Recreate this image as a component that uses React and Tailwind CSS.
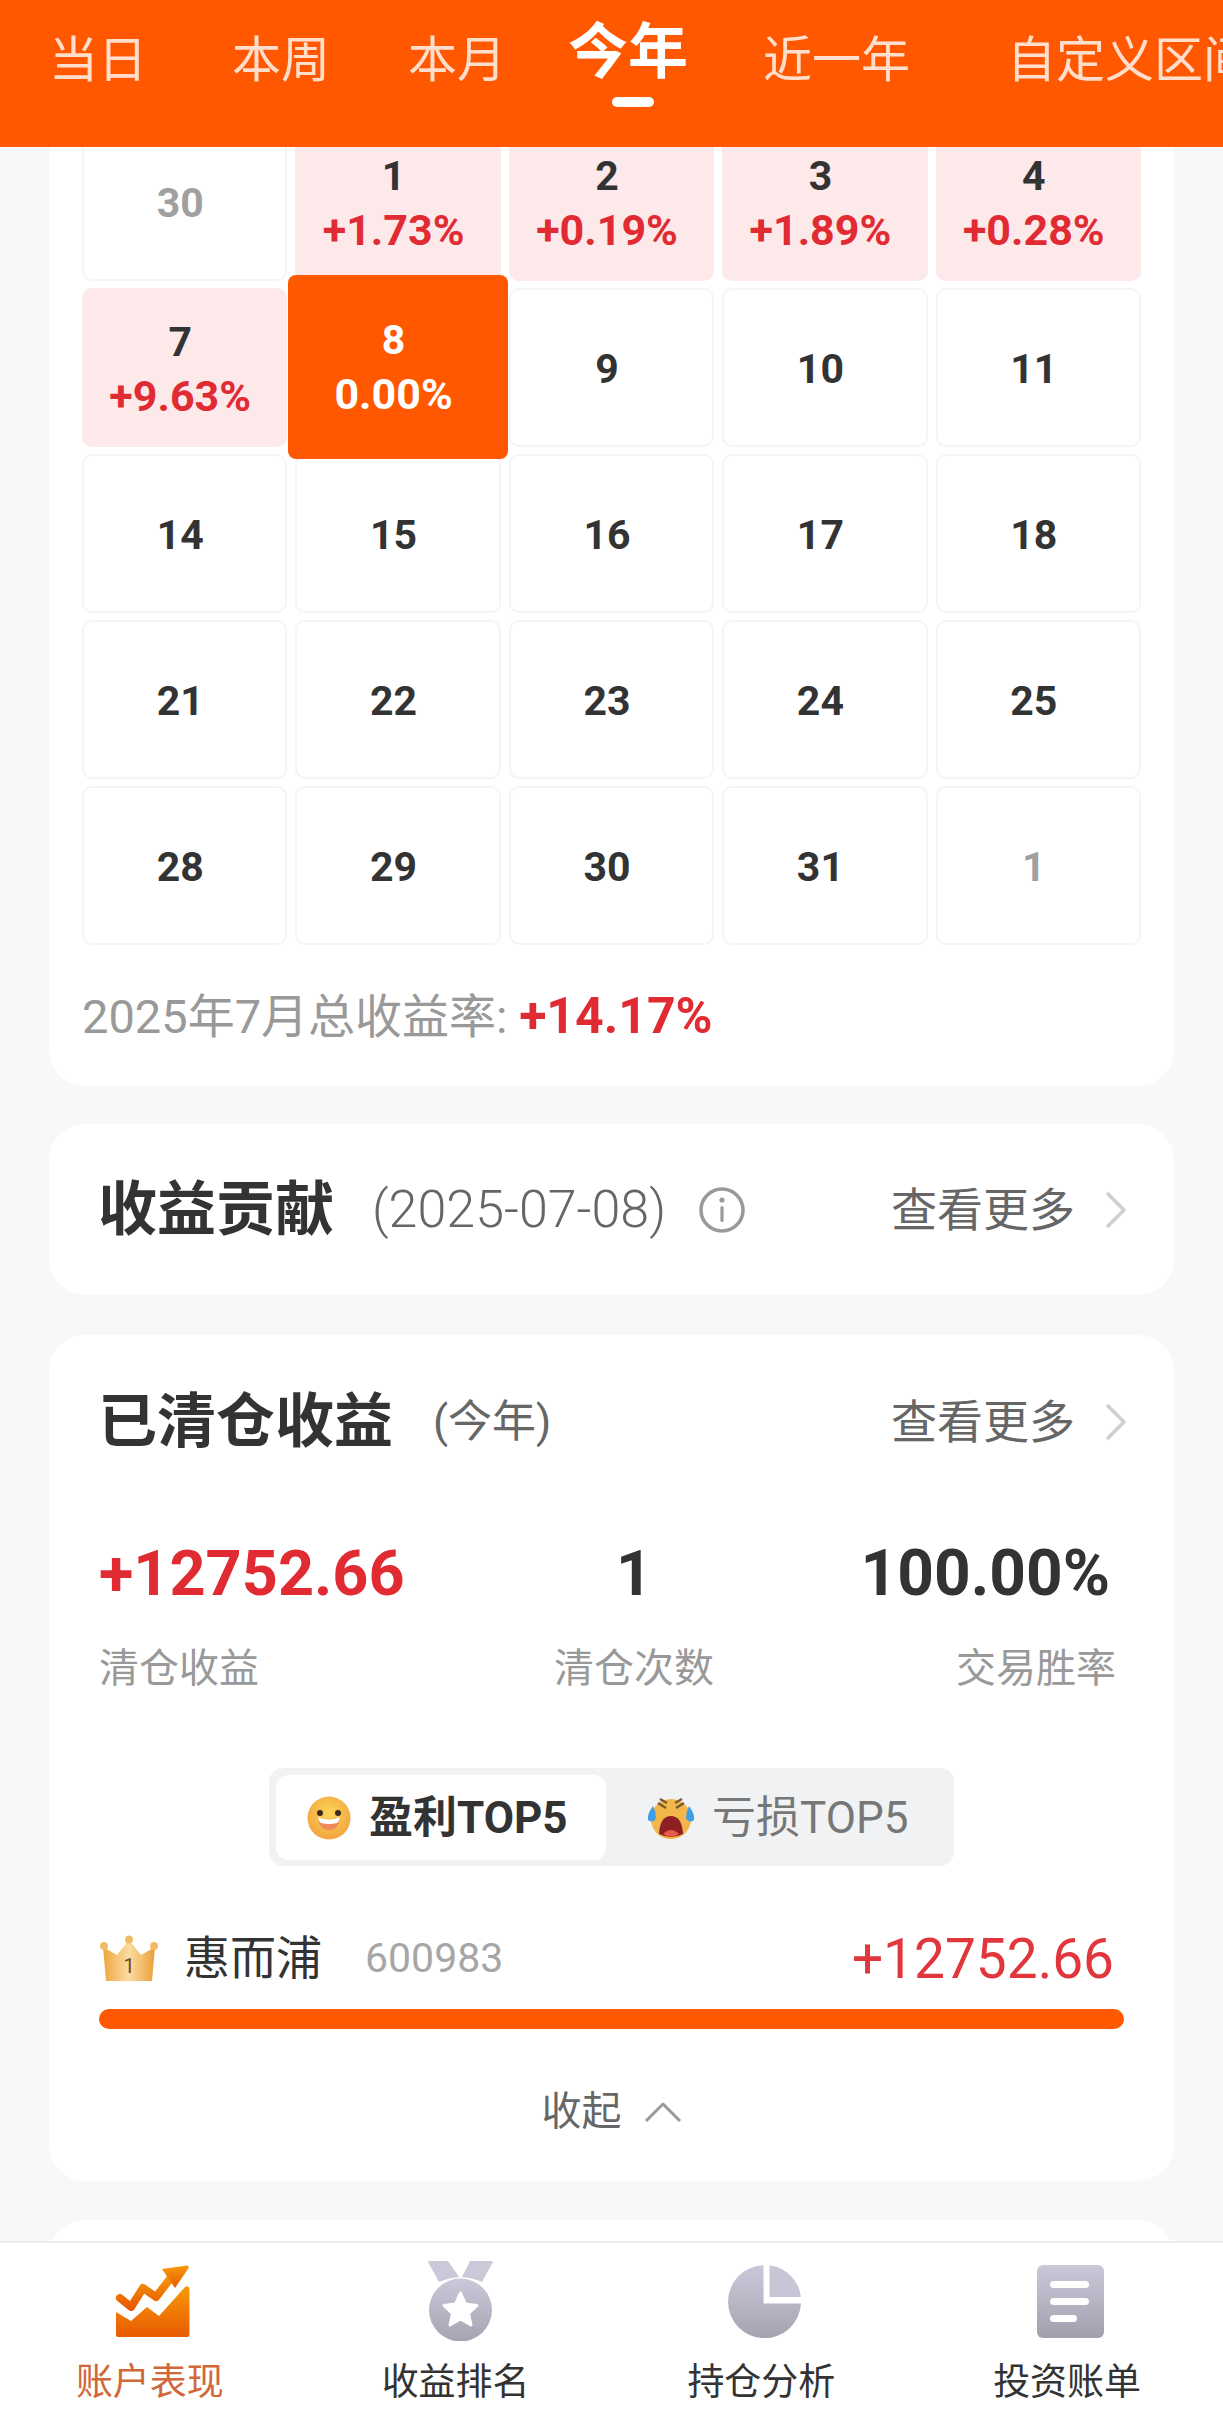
import React from 'react';

const Chevron = () => (
    <svg width="22" height="38" viewBox="0 0 22 38" fill="none" className="ml-[30px]">
        <path d="M2 2 L19 19 L2 36" stroke="#cfcfcf" strokeWidth="3.5" strokeLinejoin="round" />
    </svg>
);

const MoreLink = () => (
    <div className="ml-auto flex items-center text-[46px] leading-[60px] text-[#666666]">
        查看更多
        <Chevron />
    </div>
);

const InfoIcon = () => (
    <svg width="46" height="46" viewBox="0 0 46 46" fill="none" className="ml-[33px]">
        <circle cx="23" cy="23" r="21" stroke="#999999" strokeWidth="3.5" />
        <circle cx="23" cy="13" r="2.6" fill="#999999" />
        <rect x="21.4" y="19" width="3.2" height="16" rx="1.6" fill="#999999" />
    </svg>
);

const TrendIcon = () => (
    <svg width="75" height="72" viewBox="0 0 75 72">
        <defs>
            <linearGradient id="trendFill" x1="0" y1="0" x2="0" y2="1">
                <stop offset="0" stopColor="#f79a0a" />
                <stop offset="1" stopColor="#e85a00" />
            </linearGradient>
        </defs>
        <path fill="url(#trendFill)" d="M1 47 L16 56 L32 42 L44 51 L70 22 Q74 20 74.500 24 L74.500 70 Q74.500 72 72 72 L3 72 Q1 72 1 70 Z" />
        <path fill="none" stroke="url(#trendFill)" strokeWidth="8" strokeLinecap="round" strokeLinejoin="round" d="M5 33 L16 42 L28 23 L41 32 L58 10" />
        <path fill="url(#trendFill)" d="M47 4 L72 0.500 Q75 1 73 4 L60 23 Z" />
    </svg>
);

const MedalIcon = () => (
    <svg width="65" height="80" viewBox="0 0 65 80" className="translate-x-[2px]">
        <defs>
            <linearGradient id="medalFill" x1="0" y1="0" x2="0" y2="1">
                <stop offset="0" stopColor="#c9c9da" />
                <stop offset="1" stopColor="#a4a4b1" />
            </linearGradient>
        </defs>
        <path fill="#c9c9da" d="M0 1 Q0 0 2 0 L20 0 L31 16 Q20 17 11 21 Z" />
        <path fill="#c9c9da" d="M65 1 Q65 0 63 0 L42 0 L34 16 Q45 17 54 21 Z" />
        <circle cx="32.500" cy="49" r="31.500" fill="url(#medalFill)" />
        <path fill="#ffffff" stroke="#ffffff" strokeWidth="3" strokeLinejoin="round" d="M32.500 32 L37.500 43 L49 44.500 L40.500 52.500 L43 64 L32.500 58 L22 64 L24.500 52.500 L16 44.500 L27.500 43 Z" />
    </svg>
);

const PieIcon = () => (
    <svg width="73" height="73" viewBox="0 0 73 73">
        <defs>
            <linearGradient id="pieFill" x1="0" y1="0" x2="0" y2="1">
                <stop offset="0" stopColor="#c9c9da" />
                <stop offset="1" stopColor="#a4a4b1" />
            </linearGradient>
        </defs>
        <path fill="url(#pieFill)" d="M35.500 0.200 A36.500 36.500 0 1 0 73 38.500 L35.500 38.500 Z" />
        <path fill="#c6c6d6" d="M41.500 0.300 A36.500 36.500 0 0 1 73 32 L41.500 32 Z" />
    </svg>
);

const BillIcon = () => (
    <svg width="67" height="73" viewBox="0 0 67 73">
        <defs>
            <linearGradient id="billFill" x1="0" y1="0" x2="0" y2="1">
                <stop offset="0" stopColor="#c9c9da" />
                <stop offset="1" stopColor="#a0a0ad" />
            </linearGradient>
        </defs>
        <rect width="67" height="73" rx="6" fill="url(#billFill)" />
        <rect x="13" y="16" width="39" height="7" rx="3.500" fill="#ffffff" />
        <rect x="13" y="33" width="39" height="7" rx="3.500" fill="#ffffff" />
        <rect x="13" y="50" width="27" height="7" rx="3.500" fill="#ffffff" />
    </svg>
);

const SmileEmoji = () => (
    <svg width="44" height="44" viewBox="0 0 44 44">
        <defs>
            <radialGradient id="smileFill" cx="0.500" cy="0.400" r="0.650">
                <stop offset="0" stopColor="#fdd65a" />
                <stop offset="1" stopColor="#f0a03a" />
            </radialGradient>
        </defs>
        <circle cx="22" cy="22" r="21.500" fill="url(#smileFill)" />
        <circle cx="13" cy="17" r="3" fill="#3a2a20" />
        <circle cx="31" cy="17" r="3" fill="#3a2a20" />
        <path fill="#ef8a5a" d="M11 21 Q22 26 33 21 Q32 34 22 34 Q12 34 11 21 Z" />
        <path fill="#ffffff" d="M11 21 Q22 26 33 21 Q32 26 30 27 Q22 29 14 27 Q12 26 11 21 Z" />
    </svg>
);

const CryEmoji = () => (
    <svg width="48" height="44" viewBox="0 0 48 44">
        <circle cx="24" cy="23" r="20" fill="#f2b64a" />
        <path fill="none" stroke="#7a5a30" strokeWidth="2.500" d="M11 7 L19 12 M37 7 L29 12 M13 3 L20 7 M35 3 L28 7" />
        <path fill="#3f9ee8" d="M6 10 Q0 18 1 24 Q6 28 9 22 Q9 16 6 10 Z M42 10 Q48 18 47 24 Q42 28 39 22 Q39 16 42 10 Z" />
        <path fill="#8e1f22" d="M12 38 Q13 20 24 20 Q35 20 36 38 Q24 44 12 38 Z" />
        <path fill="#e85a4a" d="M16 38 Q24 30 32 38 Q24 43 16 38 Z" />
    </svg>
);

const CrownIcon = () => (
    <svg width="60" height="46" viewBox="0 0 60 46">
        <defs>
            <linearGradient id="crownFill" x1="0" y1="0" x2="1" y2="0">
                <stop offset="0" stopColor="#eda63f" />
                <stop offset="0.500" stopColor="#fbdca0" />
                <stop offset="1" stopColor="#ec9f3a" />
            </linearGradient>
        </defs>
        <path fill="url(#crownFill)" d="M4 12 L18 20 L30 5 L42 20 L56 12 L53 46 L7 46 Z" />
        <circle cx="5" cy="11" r="4" fill="#f2bb66" />
        <circle cx="30" cy="4.500" r="4" fill="#f2bb66" />
        <circle cx="55" cy="11" r="4" fill="#f2bb66" />
        <text x="30" y="38" textAnchor="middle" fontSize="20" fontFamily="Roboto, sans-serif" fill="#6b4a2e">1</text>
    </svg>
);

const Cell = ({ day, pct, muted, tone }) => (
    <div className={`h-[159px] pr-[9px] pt-[2px] rounded-[10px] flex flex-col items-center justify-center text-[41px] leading-[54px] font-bold ${tone === 'pink' ? 'bg-[#fde8ea]' : 'bg-white border-2 border-[#f5f5f5]'} ${muted ? 'text-[#a0a0a0]' : 'text-[#333333]'}`}>
        <div>{day}</div>
        {pct && <div className="text-[43px] leading-[54px] text-[#e12b33]">{pct}</div>}
    </div>
);

const ActiveCell = () => (
    <div className="relative h-[159px]">
        <div className="absolute -inset-x-[7px] -top-[13px] -bottom-[12px] z-[1] pr-[9px] rounded-[8px] bg-[#ff5800] flex flex-col items-center justify-center font-bold text-white">
            <div className="text-[41px] leading-[54px]">8</div>
            <div className="text-[43px] leading-[54px]">0.00%</div>
        </div>
    </div>
);

const NavItem = ({ icon, label, active }) => (
    <div className="flex flex-col items-center">
        <div className="h-[80px] flex items-center justify-center">{icon}</div>
        <div className={`mt-[17px] pr-[6px] text-[37px] leading-[50px] ${active ? 'text-[#d2683a]' : 'text-[#333333]'}`}>{label}</div>
    </div>
);

export default function App() {
    const days = [
        { day: '30', muted: true },
        { day: '1', pct: '+1.73%', tone: 'pink' },
        { day: '2', pct: '+0.19%', tone: 'pink' },
        { day: '3', pct: '+1.89%', tone: 'pink' },
        { day: '4', pct: '+0.28%', tone: 'pink' },
        { day: '7', pct: '+9.63%', tone: 'pink' },
        { active: true },
        { day: '9' }, { day: '10' }, { day: '11' },
        { day: '14' }, { day: '15' }, { day: '16' }, { day: '17' }, { day: '18' },
        { day: '21' }, { day: '22' }, { day: '23' }, { day: '24' }, { day: '25' },
        { day: '28' }, { day: '29' }, { day: '30' }, { day: '31' }, { day: '1', muted: true },
    ];

    return (
        <div className="w-[1223px] h-[2424px] flex flex-col overflow-hidden bg-[#f7f8fa] font-['Roboto','Noto_Sans_CJK_SC',sans-serif]">
            {/* Range tabs */}
            <header className="relative z-10 h-[147px] shrink-0 bg-[#ff5800] overflow-hidden flex items-start whitespace-nowrap text-[49px] leading-[60px] text-white/80">
                <span className="ml-[49px] mt-[31px]">当日</span>
                <span className="ml-[85px] mt-[31px]">本周</span>
                <span className="ml-[78px] mt-[31px]">本月</span>
                <div className="ml-[62px] mt-[18px] flex flex-col items-center">
                    <span className="text-[60px] leading-[70px] font-bold text-white">今年</span>
                    <div className="mt-[9px] ml-[10px] w-[42px] h-[10px] rounded-full bg-white" />
                </div>
                <span className="ml-[75px] mt-[31px]">近一年</span>
                <span className="ml-[97px] mt-[31px]">自定义区间</span>
            </header>

            <main className="flex-1 min-h-0 overflow-hidden px-[49px]">
                {/* Calendar */}
                <section className="-mt-[25px] rounded-b-[36px] bg-white px-[33px]">
                    <div className="grid grid-cols-5 gap-x-[8px] gap-y-[7px]">
                        {days.map((d, i) => (d.active ? <ActiveCell key={i} /> : <Cell key={i} {...d} />))}
                    </div>
                    <div className="pt-[43px] pb-[41px] text-[47px] leading-[56px] text-[#999999]">
                        2025年7月总收益率: <span className="text-[50px] font-bold text-[#e12b33]">+14.17%</span>
                    </div>
                </section>

                {/* Contribution */}
                <section className="mt-[38px] h-[171px] rounded-[36px] bg-white pl-[49px] pr-[47px] flex items-center">
                    <h2 className="text-[59px] leading-[70px] font-bold text-[#333333]">收益贡献</h2>
                    <span className="ml-[38px] text-[52px] leading-[60px] font-light text-[#666666]">(2025-07-08)</span>
                    <InfoIcon />
                    <MoreLink />
                </section>

                {/* Closed positions */}
                <section className="mt-[40px] rounded-[36px] bg-white px-[50px] pt-[52px] pb-[44px]">
                    <div className="flex items-center -mr-[3px]">
                        <h2 className="-ml-[1px] text-[59px] leading-[70px] font-bold text-[#333333]">已清仓收益</h2>
                        <span className="ml-[40px] text-[44px] leading-[60px] text-[#666666]">(今年)</span>
                        <MoreLink />
                    </div>

                    <div className="mt-[82px] flex justify-between">
                        <div className="flex flex-col items-start">
                            <div className="text-[63px] leading-[70px] font-bold text-[#e12b33]">+12752.66</div>
                            <div className="mt-[35px] text-[40px] leading-[50px] text-[#999999]">清仓收益</div>
                        </div>
                        <div className="ml-[3px] flex flex-col items-center">
                            <div className="text-[63px] leading-[70px] font-bold text-[#333333]">1</div>
                            <div className="mt-[35px] text-[40px] leading-[50px] text-[#999999]">清仓次数</div>
                        </div>
                        <div className="flex flex-col items-end pr-[8px]">
                            <div className="mr-[6px] text-[64px] leading-[70px] font-bold text-[#333333]">100.00%</div>
                            <div className="mt-[35px] text-[40px] leading-[50px] text-[#999999]">交易胜率</div>
                        </div>
                    </div>

                    <div className="mt-[74px] mx-auto w-[685px] h-[98px] rounded-[14px] bg-[#f1f2f4] p-[7px] pb-[6px] flex items-stretch">
                        <div className="w-[330px] rounded-[12px] bg-white flex items-center pl-[31px]">
                            <SmileEmoji />
                            <span className="ml-[18px] text-[44px] leading-[60px] font-bold text-[#333333]">盈利TOP5</span>
                        </div>
                        <div className="flex items-center pl-[41px]">
                            <CryEmoji />
                            <span className="ml-[17px] text-[44px] leading-[60px] text-[#777777]">亏损TOP5</span>
                        </div>
                    </div>

                    <div className="mt-[62px] flex items-center h-[60px]">
                        <CrownIcon />
                        <span className="ml-[25px] text-[46px] leading-[60px] text-[#333333]">惠而浦</span>
                        <span className="ml-[43px] text-[41px] leading-[60px] text-[#a6a6a6]">600983</span>
                        <span className="ml-auto mr-[10px] pt-[2px] text-[55px] leading-[60px] text-[#e0363c]">+12752.66</span>
                    </div>
                    <div className="mt-[21px] h-[20px] rounded-full bg-[#ff5800]" />

                    <div className="mt-[58px] flex items-center justify-center text-[40px] leading-[50px] text-[#666666]">
                        收起
                        <svg width="38" height="22" viewBox="0 0 38 22" fill="none" className="ml-[22px]">
                            <path d="M2 20 L19 3 L36 20" stroke="#999999" strokeWidth="3" strokeLinejoin="round" />
                        </svg>
                    </div>
                </section>

                {/* Next card, cut off by the tab bar */}
                <section className="mt-[39px] h-[200px] rounded-t-[36px] bg-white" />
            </main>

            {/* Bottom tab bar */}
            <nav className="h-[183px] shrink-0 bg-white border-t-2 border-[#eeeeee] pt-[18px] grid grid-cols-4">
                <NavItem icon={<TrendIcon />} label="账户表现" active />
                <NavItem icon={<MedalIcon />} label="收益排名" />
                <NavItem icon={<PieIcon />} label="持仓分析" />
                <NavItem icon={<BillIcon />} label="投资账单" />
            </nav>
        </div>
    );
}
